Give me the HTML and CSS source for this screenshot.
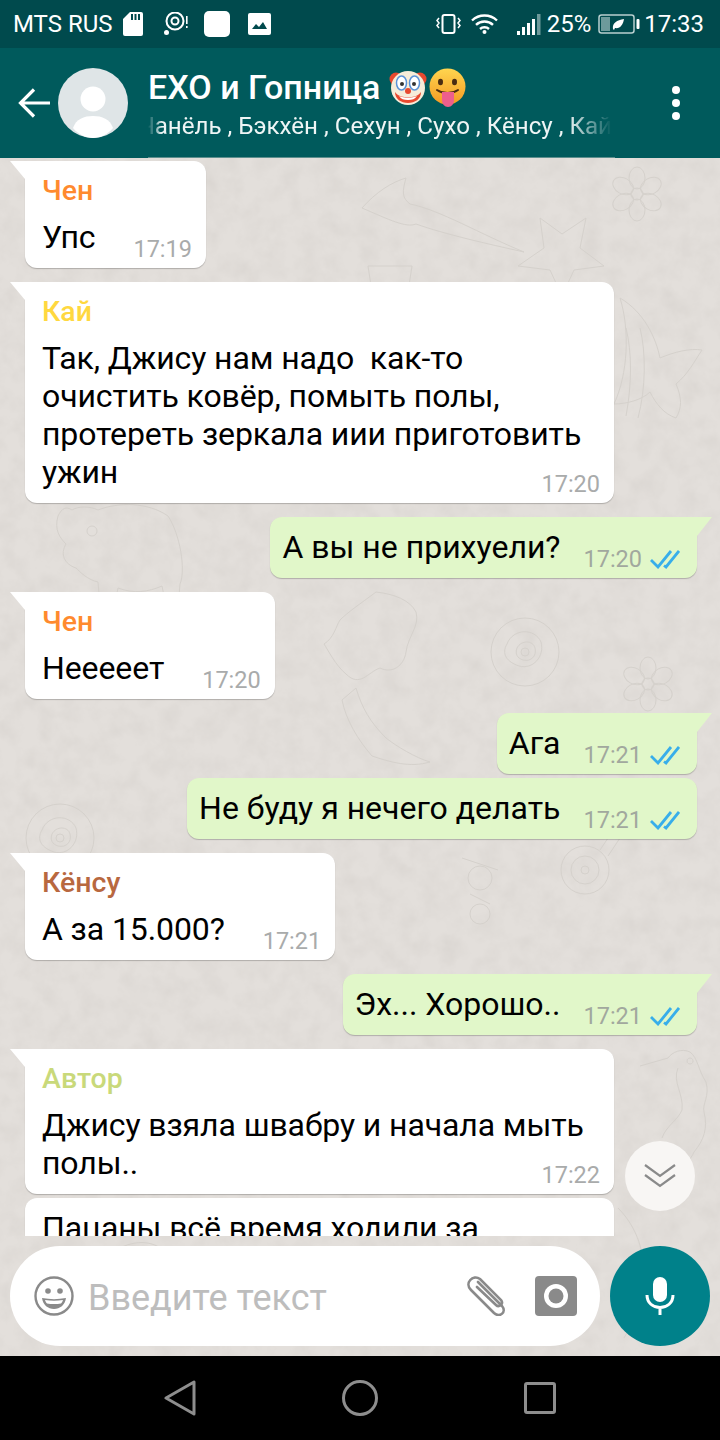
FILE: index.html
```html
<!DOCTYPE html>
<html lang="ru">
<head>
    <title>EXO и Гопница</title>
    <meta name="viewport" content="width=device-width, initial-scale=1.0">
    <link rel="stylesheet" href="styles.css">
</head>
<body>
<div class="phone">
    <div class="status-bar">
        <span class="carrier">MTS RUS</span>
        <svg class="ic-sd" width="20" height="24" viewBox="0 0 20 24"><path fill="#fff" d="M7 0h11a2 2 0 0 1 2 2v20a2 2 0 0 1-2 2H2a2 2 0 0 1-2-2V7z"/><path fill="#004a4d" d="M8 2h2v6H8zM11.500 2h2v6h-2zM15 2h2v6h-2z"/></svg>
        <svg class="ic-lens" width="24" height="24" viewBox="0 0 24 24"><circle cx="11" cy="9" r="8.500" fill="none" stroke="#fff" stroke-width="2"/><circle cx="11" cy="9" r="3.500" fill="none" stroke="#fff" stroke-width="2"/><circle cx="2.500" cy="20.500" r="2.500" fill="#fff"/><path fill="#fff" d="M22 4h1.600v8H22zM22 14h1.600v2H22z"/></svg>
        <div class="ic-blank"></div>
        <svg class="ic-image" width="23" height="22" viewBox="0 0 23 22"><rect width="23" height="22" rx="2" fill="#fff"/><path fill="#004a4d" d="M4 16l4-5 3 3 4-5 4 7z"/></svg>
        <div class="status-right">
            <svg width="25" height="20" viewBox="0 0 25 20"><rect x="6.500" y="1" width="12" height="18" rx="2" fill="none" stroke="#fff" stroke-width="2"/><path fill="none" stroke="#fff" stroke-width="1.500" d="M3 4L1 6.500l2 2.500-2 2.500 2 2.500M22 4l2 2.500L22 9l2 2.500L22 14"/></svg>
            <svg class="ic-wifi" width="27" height="20" viewBox="0 0 27 20"><g fill="none" stroke="#fff" stroke-width="2.400"><path d="M1 6.500c7-6.600 18-6.600 25 0"/><path d="M5 10.800c4.800-4.500 12.200-4.500 17 0"/><path d="M9 15c2.500-2.300 6.500-2.300 9 0"/></g><circle cx="13.500" cy="18" r="2" fill="#fff"/></svg>
            <svg class="ic-signal" width="24" height="21" viewBox="0 0 24 21"><g fill="#fff"><rect y="17" width="3" height="4"/><rect x="5" y="13" width="3" height="8"/><rect x="10" y="9" width="3" height="12"/><rect x="15" y="5" width="3" height="16"/></g><rect x="20" width="3.500" height="21" fill="#6d9a9b"/></svg>
            <span class="pct">25%</span>
            <svg class="ic-battery" width="42" height="20" viewBox="0 0 42 20"><rect x="1" y="1" width="35" height="18" rx="2.500" fill="none" stroke="#b9cfcf" stroke-width="1.500"/><rect x="3" y="3" width="9" height="14" fill="#6d9a9b"/><path fill="#fff" d="M15 15c-1-6 4-9 11-10-1 6-4 10-9 9l-1 2z"/><rect x="38.500" y="5" width="3" height="10" rx="1" fill="#fff"/></svg>
            <span class="clock">17:33</span>
        </div>
    </div>

    <header class="app-bar">
        <svg class="back" width="32" height="30" viewBox="0 0 32 30"><path fill="none" stroke="#fff" stroke-width="3.200" d="M32 15H3M16 1.500L2.500 15 16 28.500"/></svg>
        <svg class="avatar" width="70" height="70" viewBox="0 0 70 70"><circle cx="35" cy="35" r="35" fill="#dfe5e7"/><circle cx="35" cy="31" r="12.500" fill="#fff"/><path fill="#fff" d="M15 60c3-9 11-12 20-12s17 3 20 12c-5 6-12 10-20 10s-15-4-20-10z"/></svg>
        <div class="titles">
            <div class="title"><span>EXO и Гопница</span><svg class="emoji" width="38" height="38" viewBox="0 0 38 38"><circle cx="7" cy="11" r="6.500" fill="#e8492f"/><circle cx="31" cy="11" r="6.500" fill="#e8492f"/><circle cx="19" cy="20" r="17" fill="#f6ecd9"/><ellipse cx="12.500" cy="15" rx="5" ry="7" fill="#fff" stroke="#5b93d8" stroke-width="1.500"/><ellipse cx="25.500" cy="15" rx="5" ry="7" fill="#fff" stroke="#5b93d8" stroke-width="1.500"/><circle cx="13" cy="16" r="2" fill="#333"/><circle cx="25" cy="16" r="2" fill="#333"/><circle cx="19" cy="23" r="3" fill="#e8492f"/><path fill="#e8492f" d="M6 24c4 5 8 5 13 5s9 0 13-5c0 7-6 11-13 11S6 31 6 24z"/><path fill="#fff" d="M10 28c5 2 13 2 18 0-2 3-5 4-9 4s-7-1-9-4z"/></svg><svg class="emoji tongue" width="37" height="39" viewBox="0 0 37 39"><defs><linearGradient id="face" x1="0" y1="0" x2="0" y2="1"><stop offset="0" stop-color="#ffd54f"/><stop offset="1" stop-color="#f59a23"/></linearGradient></defs><circle cx="18.500" cy="18.500" r="18" fill="url(#face)"/><ellipse cx="11.500" cy="14" rx="2.500" ry="3.200" fill="#4a2c12"/><ellipse cx="25.500" cy="14" rx="2.500" ry="3.200" fill="#4a2c12"/><path fill="none" stroke="#4a2c12" stroke-width="2" stroke-linecap="round" d="M8 22c6 4 15 4 21 0"/><path fill="#ee5f8c" d="M13 24h12v8c0 4-2.500 7-6 7s-6-3-6-7z"/></svg></div>
            <div class="members"><span>Чанёль , Бэкхён , Сехун , Сухо , Кёнсу , Кай</span></div>
        </div>
        <div class="dots"><i></i><i></i><i></i></div>
    </header>

    <main class="chat">
        <svg class="wallpaper" width="720" height="1198" viewBox="0 0 720 1198">
            <defs>
                <filter id="grain"><feTurbulence type="fractalNoise" baseFrequency="0.05" numOctaves="4" seed="7"/><feColorMatrix values="0 0 0 0 0.60  0 0 0 0 0.57  0 0 0 0 0.54  0.4 0.4 0 0 -0.32"/></filter>
                <g id="flower"><ellipse cy="-16" rx="8" ry="11"/><ellipse cy="-16" rx="8" ry="11" transform="rotate(60)"/><ellipse cy="-16" rx="8" ry="11" transform="rotate(120)"/><ellipse cy="-16" rx="8" ry="11" transform="rotate(180)"/><ellipse cy="-16" rx="8" ry="11" transform="rotate(240)"/><ellipse cy="-16" rx="8" ry="11" transform="rotate(300)"/><circle r="6"/></g>
                <g id="rose"><circle r="34"/><path d="M-18-8c6-16 28-16 34-2 4 14-8 28-22 24-12-4-18-12-12-22zM-8-4c4-8 16-8 18 0 2 8-4 14-12 12-6-2-8-6-6-12z"/><circle r="4"/></g>
            </defs>
            <rect width="720" height="1198" fill="#e3dfdb"/>
            <rect width="720" height="1198" filter="url(#grain)"/>
            <g fill="none" stroke="#d5d1cc" stroke-width="1">
                <use href="#flower" x="637" y="36"/>
                <use href="#flower" x="648" y="526"/>
                <use href="#rose" x="525" y="494"/>
                <use href="#rose" x="60" y="680"/>
                <!-- bird and star -->
                <path d="M362 50c14-16 30-26 44-30-4 14-4 20 4 26 30 6 70 30 114 48-36-8-80-18-108-28-10 4-26-4-54-16z"/>
                <path d="M540 60l22 16 24-16-6 30 24 18-30 4-12 26-12-26-32-4 26-18z"/>
                <path d="M368 108h44l-8 52h-28zM436 128h10v32h-10z"/>
                <!-- fish -->
                <path d="M620 140c24 14 36 40 40 60 14-6 30-10 42-8-8 12-14 24-26 34 6 14 6 24 0 34-12-4-20-14-26-26-8 8-24 12-36 12 14-30 16-74 6-106z"/>
                <path d="M640 170c6 24 6 60-2 90M626 170c6 24 6 56 0 88"/>
                <!-- rhino -->
                <path d="M58 358c-4 14 2 22 8 28-6 10-2 20 10 24 4 4 12 12 22 14l2 24 14 2 4-20c16 6 30 4 44-2l4 20 12 2 2-24c6-14 0-50-12-68-20-14-50-14-70-6-8-4-20-4-26 0-6-4-10-2-14 6z"/>
                <circle cx="92" cy="373" r="5"/>
                <!-- dino -->
                <path d="M376 434c18 2 34 8 40 20 4 14-8 24-10 40-2 14-14 22-26 16-12 4-20 20-34 6-10-8-18-24-22-30 10-6 12-18 16-24 8-8 20-16 36-28z"/>
                <path d="M356 530c6 20 14 34 30 50 10 8 30 20 44 24-20 6-40 0-58-6-14-16-26-36-30-56z"/>
                <path d="M248 470l-8 16 20 8 10-14z"/>
                <!-- wheel and small toys -->
                <circle cx="585" cy="712" r="24"/><circle cx="585" cy="712" r="14"/><circle cx="585" cy="712" r="4"/>
                <path d="M600 692l24-36M608 698l24-36"/>
                <circle cx="480" cy="756" r="10"/><circle cx="480" cy="720" r="12"/><path d="M462 700l36 12M470 736l20 10"/>
                <!-- seahorse -->
                <path d="M640 908l28-8c4-6 14-10 22-6 8 6 8 18 16 30 4 14-4 22-2 30 4 16 0 28-10 40-6 14-24 26-40 22-14-4-20-20-8-26 12-4 16 10 8 14"/>
                <path d="M678 910c-6 14 6 26 4 42-4 10-16 16-20 28M690 900a3 3 0 1 0 .1 0"/>
                <path d="M618 1050c30 30 36 80 6 130"/>
                <path d="M40 900c30 10 50 40 30 70M120 1090c20-10 40-6 50 10"/>
            </g>
        </svg>
        <div class="messages">
            <div class="msg in">
                <div class="name chen">Чен</div>
                <div class="body"><div class="text">Упс</div><div class="meta"><span class="time">17:19</span></div></div>
            </div>
            <div class="msg in wide">
                <div class="name kai">Кай</div>
                <div class="body"><div class="text">Так, Джису нам надо&nbsp; как-то<br>очистить ковёр, помыть полы,<br>протереть зеркала иии приготовить<br>ужин</div><div class="meta"><span class="time">17:20</span></div></div>
            </div>
            <div class="msg out">
                <div class="body"><div class="text">А вы не прихуели?</div><div class="meta"><span class="time">17:20</span><svg class="ticks" width="30" height="20" viewBox="0 0 30 20"><path fill="none" stroke="#38aeea" stroke-width="2.800" d="M1 11l7 7L21 2M14 16.500l2 1.500L29 2"/></svg></div></div>
            </div>
            <div class="msg in">
                <div class="name chen">Чен</div>
                <div class="body"><div class="text">Нееееет</div><div class="meta"><span class="time">17:20</span></div></div>
            </div>
            <div class="msg out">
                <div class="body"><div class="text">Ага</div><div class="meta"><span class="time">17:21</span><svg class="ticks" width="30" height="20" viewBox="0 0 30 20"><path fill="none" stroke="#38aeea" stroke-width="2.800" d="M1 11l7 7L21 2M14 16.500l2 1.500L29 2"/></svg></div></div>
            </div>
            <div class="msg out cont">
                <div class="body"><div class="text">Не буду я нечего делать</div><div class="meta"><span class="time">17:21</span><svg class="ticks" width="30" height="20" viewBox="0 0 30 20"><path fill="none" stroke="#38aeea" stroke-width="2.800" d="M1 11l7 7L21 2M14 16.500l2 1.500L29 2"/></svg></div></div>
            </div>
            <div class="msg in">
                <div class="name kyungsoo">Кёнсу</div>
                <div class="body"><div class="text">А за 15.000?</div><div class="meta"><span class="time">17:21</span></div></div>
            </div>
            <div class="msg out">
                <div class="body"><div class="text">Эх... Хорошо..</div><div class="meta"><span class="time">17:21</span><svg class="ticks" width="30" height="20" viewBox="0 0 30 20"><path fill="none" stroke="#38aeea" stroke-width="2.800" d="M1 11l7 7L21 2M14 16.500l2 1.500L29 2"/></svg></div></div>
            </div>
            <div class="msg in wide">
                <div class="name author">Автор</div>
                <div class="body"><div class="text">Джису взяла швабру и начала мыть<br>полы..</div><div class="meta"><span class="time">17:22</span></div></div>
            </div>
            <div class="msg in wide cont">
                <div class="body"><div class="text">Пацаны всё время ходили за<br>ней</div></div>
            </div>
        </div>

        <div class="scroll-down">
            <svg width="32" height="26" viewBox="0 0 32 26"><path fill="none" stroke="#8a8a8a" stroke-width="2.200" d="M1 2l15 11L31 2M1 12l15 11 15-11"/></svg>
        </div>

        <div class="composer">
            <div class="input-pill">
                <svg width="40" height="40" viewBox="0 0 40 40"><circle cx="20" cy="20" r="18.500" fill="none" stroke="#8a8a8a" stroke-width="2.400"/><circle cx="14" cy="15" r="2.800" fill="#8a8a8a"/><circle cx="26" cy="15" r="2.800" fill="#8a8a8a"/><path fill="#8a8a8a" d="M8 22c8 1.500 16 1.500 24 0-1 7-6 11-12 11S9 29 8 22z"/><path fill="#fff" d="M11 24c6 1 12 1 18 0-.5 1.500-1 2.500-2 3.500-4 .7-10 .7-14 0-1-1-1.500-2-2-3.500z"/></svg>
                <span class="placeholder">Введите текст</span>
                <svg class="clip" width="42" height="40" viewBox="0 0 42 40"><path fill="none" stroke="#8a8a8a" stroke-width="2.600" stroke-linecap="round" d="M13 6l24 24c5 6-2 12-8 7L6 14C-1 7 8-2 15 3l21 21c3 4-2 8-5 5L12 11"/></svg>
                <svg class="camera" width="42" height="40" viewBox="0 0 42 40"><rect width="42" height="40" rx="4" fill="#8a8a8a"/><circle cx="21" cy="20" r="12" fill="#fff"/><circle cx="21" cy="20" r="7.500" fill="#8a8a8a"/></svg>
            </div>
            <div class="mic-btn">
                <svg width="30" height="38" viewBox="0 0 30 38"><rect x="8" y="0" width="14" height="25" rx="7" fill="#fff"/><path fill="none" stroke="#fff" stroke-width="3" d="M2 18c0 8 6 12.500 13 12.500S28 26 28 18M15 30v8"/></svg>
            </div>
        </div>
    </main>

    <nav class="nav-bar">
        <div class="nav-item"><svg width="32" height="36" viewBox="0 0 32 36"><path fill="none" stroke="#8e8e8e" stroke-width="3" stroke-linejoin="round" d="M30 2v32L2 18z"/></svg></div>
        <div class="nav-item"><svg width="36" height="36" viewBox="0 0 36 36"><circle cx="18" cy="18" r="16.500" fill="none" stroke="#8e8e8e" stroke-width="3"/></svg></div>
        <div class="nav-item"><svg width="32" height="32" viewBox="0 0 32 32"><rect x="1.500" y="1.500" width="29" height="29" rx="1.500" fill="none" stroke="#8e8e8e" stroke-width="3"/></svg></div>
    </nav>
</div>
</body>
</html>
```

FILE: styles.css
```css
:root {
    --status-bg: #004a4d;
    --bar-bg: #005a5c;
    --teal: #00818a;
    --time: #a9abab;
    --out-bg: #e1f7c9;
}

body, html {
    margin: 0;
    padding: 0;
    background: #000;
}

.phone {
    width: 720px;
    height: 1440px;
    display: flex;
    flex-direction: column;
    overflow: hidden;
    font-family: Roboto, "Noto Sans", sans-serif;
    color: #000;
}

/* status bar */
.status-bar {
    flex: 0 0 48px;
    display: flex;
    align-items: center;
    padding: 0 16px 0 13px;
    background: var(--status-bg);
    color: #fff;
    font-size: 24px;
}

.carrier {
    margin-right: 10px;
}

.ic-lens {
    margin-left: 21px;
}

.ic-blank {
    width: 26px;
    height: 26px;
    margin-left: 16px;
    background: #fff;
    border-radius: 5px;
}

.ic-image {
    margin-left: 18px;
}

.status-right {
    margin-left: auto;
    display: flex;
    align-items: center;
}

.ic-wifi {
    margin-left: 10px;
}

.ic-signal {
    margin-left: 19px;
}

.pct {
    margin-left: 6px;
}

.ic-battery {
    margin-left: 7px;
}

.clock {
    margin-left: 4px;
}

/* header */
.app-bar {
    flex: 0 0 110px;
    position: relative;
    display: flex;
    align-items: center;
    padding-left: 18px;
    background: var(--bar-bg);
    color: #fff;
}

/* thin line under the member list */
.app-bar::after {
    content: "";
    position: absolute;
    left: 148px;
    bottom: 0;
    width: 467px;
    height: 1px;
    background: #5d8f8e;
}

.avatar {
    margin-left: 8px;
}

.titles {
    width: 464px;
    margin-left: 20px;
    margin-top: 2px;
}

.title {
    display: flex;
    align-items: center;
    height: 42px;
    font-size: 34px;
    font-weight: 500;
    white-space: nowrap;
}

.emoji {
    margin-left: 9px;
    flex: none;
}

.emoji.tongue {
    margin-left: 2px;
}

.members {
    display: flex;
    justify-content: flex-end;
    overflow: hidden;
    margin-top: 2px;
    font-size: 24.150px;
    line-height: 32px;
    white-space: nowrap;
    color: #eef5f5;
    -webkit-mask-image: linear-gradient(to right, transparent 0, #000 14px, #000 420px, transparent 464px);
    mask-image: linear-gradient(to right, transparent 0, #000 14px, #000 420px, transparent 464px);
}

.members span {
    flex: none;
}

.dots {
    margin-left: 60px;
    display: flex;
    flex-direction: column;
    gap: 5px;
}

.dots i {
    display: block;
    width: 8px;
    height: 8px;
    background: #fff;
    border-radius: 50%;
}

/* chat */
.chat {
    flex: 1;
    position: relative;
    display: flex;
    flex-direction: column;
    min-height: 0;
}

.wallpaper {
    position: absolute;
    top: 0;
    left: 0;
}

.messages {
    flex: 1;
    min-height: 0;
    position: relative;
    overflow: hidden;
    display: flex;
    flex-direction: column;
    padding-top: 3px;
}

.msg {
    position: relative;
    flex: none;
    box-sizing: border-box;
    margin-bottom: 14px;
    padding: 11px 14px 12px 17px;
    background: #fff;
    border-radius: 0 12px 12px 12px;
    box-shadow: 0 1px 1px rgba(0, 0, 0, .22);
    font-size: 32px;
    line-height: 38px;
}

.msg.in {
    align-self: flex-start;
    margin-left: 25px;
}

.msg.in .text {
    letter-spacing: -.1px;
}

.msg.in::before {
    content: "";
    position: absolute;
    top: 0;
    left: -15px;
    width: 15px;
    height: 18px;
    background: #fff;
    clip-path: polygon(0 0, 100% 0, 100% 100%);
}

.msg.out {
    align-self: flex-end;
    margin-right: 23px;
    padding: 11px 17px 12px 12px;
    background: var(--out-bg);
    border-radius: 12px 0 12px 12px;
}

.msg.out::after {
    content: "";
    position: absolute;
    top: 0;
    right: -15px;
    width: 15px;
    height: 19px;
    background: var(--out-bg);
    clip-path: polygon(0 0, 100% 0, 0 100%);
}

.msg.wide {
    width: 589px;
}

/* follows a bubble from the same sender: no tail, smaller gap */
.msg.cont {
    border-radius: 12px;
    margin-top: -10px;
}

.msg.cont::before, .msg.cont::after {
    display: none;
}

.name {
    font-size: 28.500px;
    font-weight: 500;
    line-height: 30px;
    margin: 4px 0 12px;
}

.chen { color: #ff8a2e; }
.kai { color: #ffd83f; }
.kyungsoo { color: #b8683f; }
.author { color: #c9d97a; }

.body {
    display: flex;
    align-items: flex-end;
    gap: 38px;
}

.msg.out .body {
    gap: 23px;
}

.msg.wide .body {
    display: grid;
}

.msg.wide .text, .msg.wide .meta {
    grid-area: 1 / 1;
}

.msg.wide .meta {
    justify-self: end;
    align-self: end;
}

.text {
    white-space: nowrap;
}

.meta {
    display: flex;
    align-items: center;
    gap: 8px;
    margin-bottom: -8px;
    height: 30px;
    flex: none;
}

.time {
    font-size: 23.500px;
    line-height: 30px;
    color: var(--time);
}

.msg.out .time {
    color: #a1a89e;
}

.scroll-down {
    position: absolute;
    top: 983px;
    left: 625px;
    width: 70px;
    height: 70px;
    display: flex;
    align-items: center;
    justify-content: center;
    background: #f8f6f4;
    border-radius: 50%;
}

.composer {
    flex: none;
    position: relative;
    display: flex;
    gap: 10px;
    padding: 10px;
}

.input-pill {
    flex: 1;
    height: 100px;
    box-sizing: border-box;
    display: flex;
    align-items: center;
    padding: 0 23px 0 24px;
    background: #fff;
    border-radius: 50px;
}

.placeholder {
    margin-left: 14px;
    padding-top: 3px;
    font-size: 36px;
    color: #bdbdbd;
}

.clip {
    margin-left: auto;
}

.camera {
    margin-left: 28px;
}

.mic-btn {
    flex: 0 0 100px;
    height: 100px;
    display: flex;
    align-items: center;
    justify-content: center;
    background: var(--teal);
    border-radius: 50%;
}

/* nav */
.nav-bar {
    flex: 0 0 84px;
    display: flex;
    justify-content: center;
    align-items: center;
    background: #000;
}

.nav-item {
    width: 180px;
    display: flex;
    justify-content: center;
}
```
